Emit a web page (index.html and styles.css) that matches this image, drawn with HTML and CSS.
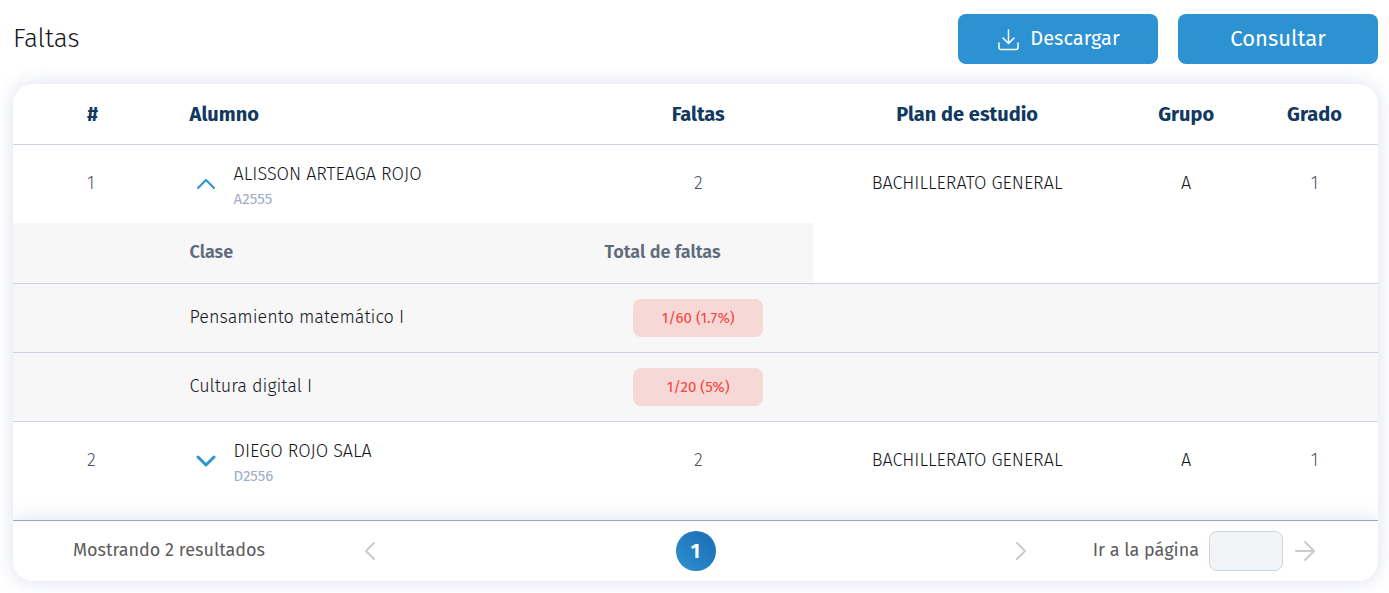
FILE: index.html
```
<!DOCTYPE html>
<html lang="es">
  <head>
    <meta charset="UTF-8" />
    <meta name="viewport" content="width=device-width, initial-scale=1.0" />
    <title>Faltas</title>
    <link rel="stylesheet" href="styles.css">
  </head>
  <body>
    <header class="page-header">
      <h1>Faltas</h1>
      <div class="actions">
        <button class="btn btn-icon">
          <svg width="21" height="22" viewBox="0 0 21 22">
            <path d="M10.500 1v13M5 9l5.500 5.500L16 9M1 14v4.500q0 2 2 2h15q2 0 2-2V14" />
          </svg>
          Descargar
        </button>
        <button class="btn btn-large">Consultar</button>
      </div>
    </header>

    <main class="card">
      <table class="absences">
        <colgroup>
          <col class="col-number" />
          <col class="col-student" />
          <col class="col-absences" />
          <col class="col-plan" />
          <col class="col-group" />
          <col class="col-grade" />
        </colgroup>
        <thead>
          <tr>
            <th class="number">#</th>
            <th class="left">Alumno</th>
            <th>Faltas</th>
            <th>Plan de estudio</th>
            <th>Grupo</th>
            <th>Grado</th>
          </tr>
        </thead>
        <tbody>
          <tr class="student-row">
            <td class="number muted">1</td>
            <td class="left">
              <div class="student">
                <button class="toggle" aria-label="Ocultar clases">
                  <svg width="20" height="12" viewBox="0 0 20 12">
                    <path d="M2 10l8-8 8 8" />
                  </svg>
                </button>
                <div class="student-info">
                  <div class="student-name">ALISSON ARTEAGA ROJO</div>
                  <div class="student-id">A2555</div>
                </div>
              </div>
            </td>
            <td class="muted">2</td>
            <td>BACHILLERATO GENERAL</td>
            <td>A</td>
            <td class="muted">1</td>
          </tr>

          <!-- Clases del alumno -->
          <tr class="detail-head">
            <th></th>
            <th class="left">Clase</th>
            <th class="left">Total de faltas</th>
          </tr>
          <tr class="detail-row">
            <td></td>
            <td class="left">Pensamiento matemático I</td>
            <td class="badge-cell"><span class="badge">1/60 (1.7%)</span></td>
            <td colspan="3"></td>
          </tr>
          <tr class="detail-row">
            <td></td>
            <td class="left">Cultura digital I</td>
            <td class="badge-cell"><span class="badge">1/20 (5%)</span></td>
            <td colspan="3"></td>
          </tr>

          <tr class="student-row bordered">
            <td class="number muted">2</td>
            <td class="left">
              <div class="student">
                <button class="toggle closed" aria-label="Ver clases">
                  <svg width="20" height="12" viewBox="0 0 20 12">
                    <path d="M2 2l8 8 8-8" />
                  </svg>
                </button>
                <div class="student-info">
                  <div class="student-name">DIEGO ROJO SALA</div>
                  <div class="student-id">D2556</div>
                </div>
              </div>
            </td>
            <td class="muted">2</td>
            <td>BACHILLERATO GENERAL</td>
            <td>A</td>
            <td class="muted">1</td>
          </tr>
        </tbody>
      </table>

      <footer class="card-footer">
        <div class="results">Mostrando 2 resultados</div>
        <nav class="pager">
          <button class="icon-btn" aria-label="Anterior">
            <svg width="20" height="20" viewBox="0 0 20 20">
              <path d="M14 2l-8 8 8 8" />
            </svg>
          </button>
          <button class="page current">1</button>
          <button class="icon-btn" aria-label="Siguiente">
            <svg width="20" height="20" viewBox="0 0 20 20">
              <path d="M6 2l8 8-8 8" />
            </svg>
          </button>
        </nav>
        <div class="go-to">
          <label for="pageInput">Ir a la página</label>
          <input type="text" id="pageInput" />
          <button class="icon-btn" aria-label="Ir">
            <svg width="20" height="20" viewBox="0 0 20 20">
              <path d="M1 10h18M10 1l9 9-9 9" />
            </svg>
          </button>
        </div>
      </footer>
    </main>
  </body>
</html>
```
FILE: styles.css
```
* {
  box-sizing: border-box;
}

body {
  margin: 0;
  padding: 14px 11px 12px 13px;
  background-color: #fff;
  color: #14161c;
  font-family: "Fira Sans", Lato, sans-serif;
  font-size: 18px;
}

button,
input {
  font-family: inherit;
}

button {
  padding: 0;
  border: none;
  background: none;
  cursor: pointer;
}

svg {
  display: block;
  fill: none;
  stroke: currentColor;
  stroke-width: 2;
  stroke-linecap: round;
  stroke-linejoin: round;
}

.page-header {
  display: flex;
  align-items: center;
  justify-content: space-between;
  margin-bottom: 20px;
}

h1 {
  margin: 0;
  font-size: 26px;
  font-weight: 300;
  line-height: 50px;
}

.actions {
  display: flex;
  gap: 20px;
}

.btn {
  display: flex;
  align-items: center;
  justify-content: center;
  gap: 11px;
  width: 200px;
  height: 50px;
  padding-bottom: 2px;
  border-radius: 8px;
  background-color: #2d92d1;
  color: white;
  font-size: 20px;
}

.btn-large {
  font-size: 22px;
}

.btn-icon {
  padding-left: 2px;
}

.btn-icon svg {
  margin-top: 3px;
  stroke-width: 1.5;
}

/* Card */
.card {
  border-radius: 20px;
  background: white;
  box-shadow: 0 0 20px rgba(40, 60, 130, 0.16);
  overflow: hidden;
}

.absences {
  width: 100%;
  margin-bottom: 20px;
  border-spacing: 0;
  table-layout: fixed;
}

.col-number {
  width: 11.4%;
}

.col-student {
  width: 30.4%;
}

.col-absences {
  width: 16.8%;
}

.col-plan {
  width: 22.6%;
}

.col-group {
  width: 9.5%;
}

.col-grade {
  width: 9.3%;
}

.absences th,
.absences td {
  padding: 0 20px;
  text-align: center;
  white-space: nowrap;
}

.absences td {
  padding-bottom: 2px;
  font-weight: 300;
}

.absences .left {
  padding-left: 21px;
  text-align: left;
}

.absences .number {
  padding-left: 74px;
  text-align: left;
}

.absences thead th {
  height: 61px;
  border-bottom: 1px solid #cbd5e1;
  color: #12395f;
  font-size: 20px;
  font-weight: bold;
}

.student-row td {
  height: 78px;
}

.bordered td {
  height: 79px;
  border-top: 1px solid #cbd5e1;
}

.absences .muted {
  color: #4a5566;
}

.student {
  display: flex;
  align-items: center;
  gap: 18px;
  padding-left: 6px;
}

.student-info {
  padding-top: 5px;
}

.student-name {
  line-height: 26px;
}

.student-id {
  color: #9dacc8;
  font-size: 15px;
  font-weight: normal;
  line-height: 24px;
}

.toggle {
  padding-top: 2px;
  color: #2d92d1;
}

.toggle.closed svg {
  stroke-width: 3;
}

.absences .detail-head th {
  height: 60px;
  padding-bottom: 2px;
  background-color: #f7f7f7;
  color: #5f6b7c;
  font-weight: 600;
}

.detail-row td {
  height: 69px;
  border-top: 1px solid #cbd5e1;
  background-color: #f7f7f7;
}

.absences .badge-cell {
  padding-bottom: 0;
}

.badge {
  display: inline-block;
  width: 130px;
  border-radius: 8px;
  background-color: #f6d9d7;
  color: #f8423c;
  font-size: 15px;
  font-weight: normal;
  line-height: 38px;
  vertical-align: middle;
}

/* Pagination */
.card-footer {
  display: flex;
  align-items: center;
  height: 61px;
  padding: 0 63px 0 60px;
  border-top: 1px solid #92a9cb;
  box-shadow: 0 0 20px rgba(40, 60, 100, 0.16);
  color: #5c5c5c;
}

.results,
.go-to label {
  padding-bottom: 2px;
}

.results {
  flex: 0 0 287px;
}

.pager {
  display: flex;
  flex: 1;
  align-items: center;
  justify-content: space-between;
}

.icon-btn {
  color: #cbcbcb;
}

.page {
  width: 40px;
  height: 40px;
  border-radius: 50%;
  color: white;
  font-size: 20px;
  font-weight: bold;
}

.page.current {
  background: linear-gradient(45deg, #2d92d1, #1a6ab3);
}

.go-to {
  display: flex;
  flex: 0 0 284px;
  align-items: center;
  justify-content: flex-end;
}

.go-to input {
  width: 74px;
  height: 40px;
  margin: 0 12px 0 10px;
  padding: 0 8px;
  border: 1px solid #cbd5e1;
  border-radius: 8px;
  background-color: #f3f4f6;
  font-size: 18px;
}
```
